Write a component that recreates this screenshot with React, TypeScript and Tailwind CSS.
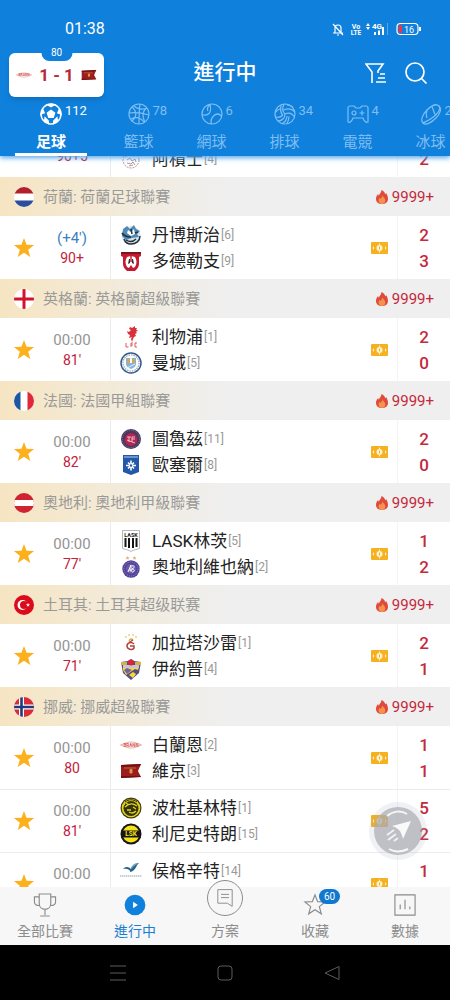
import { ReactNode, useState } from "react";

interface Team {
  name: string;
  rank: number;
  score: number;
  crest: string;
}

interface Match {
  kickoff: string;
  added?: boolean;
  minute: string;
  home?: Team;
  away?: Team;
}

interface League {
  title?: string;
  flag?: string;
  matches: Match[];
}

const LEAGUES: League[] = [
  {
    matches: [{ kickoff: "", minute: "90+5", away: { name: "阿積士", rank: 4, score: 2, crest: "ajax" } }],
  },
  {
    title: "荷蘭: 荷蘭足球聯賽",
    flag: "nl",
    matches: [
      {
        kickoff: "(+4')",
        added: true,
        minute: "90+",
        home: { name: "丹博斯治", rank: 6, score: 2, crest: "denbosch" },
        away: { name: "多德勒支", rank: 9, score: 3, crest: "dordrecht" },
      },
    ],
  },
  {
    title: "英格蘭: 英格蘭超級聯賽",
    flag: "en",
    matches: [
      {
        kickoff: "00:00",
        minute: "81'",
        home: { name: "利物浦", rank: 1, score: 2, crest: "liverpool" },
        away: { name: "曼城", rank: 5, score: 0, crest: "mancity" },
      },
    ],
  },
  {
    title: "法國: 法國甲組聯賽",
    flag: "fr",
    matches: [
      {
        kickoff: "00:00",
        minute: "82'",
        home: { name: "圖魯茲", rank: 11, score: 2, crest: "toulouse" },
        away: { name: "歐塞爾", rank: 8, score: 0, crest: "auxerre" },
      },
    ],
  },
  {
    title: "奧地利: 奧地利甲級聯賽",
    flag: "at",
    matches: [
      {
        kickoff: "00:00",
        minute: "77'",
        home: { name: "LASK林茨", rank: 5, score: 1, crest: "lask" },
        away: { name: "奧地利維也納", rank: 2, score: 2, crest: "austria" },
      },
    ],
  },
  {
    title: "土耳其: 土耳其超级联赛",
    flag: "tr",
    matches: [
      {
        kickoff: "00:00",
        minute: "71'",
        home: { name: "加拉塔沙雷", rank: 1, score: 2, crest: "galatasaray" },
        away: { name: "伊約普", rank: 4, score: 1, crest: "eyup" },
      },
    ],
  },
  {
    title: "挪威: 挪威超級聯賽",
    flag: "no",
    matches: [
      {
        kickoff: "00:00",
        minute: "80",
        home: { name: "白蘭恩", rank: 2, score: 1, crest: "brann" },
        away: { name: "維京", rank: 3, score: 1, crest: "viking" },
      },
      {
        kickoff: "00:00",
        minute: "81'",
        home: { name: "波杜基林特", rank: 1, score: 5, crest: "bodo" },
        away: { name: "利尼史特朗", rank: 15, score: 2, crest: "lsk" },
      },
      {
        kickoff: "00:00",
        minute: "81'",
        home: { name: "侯格辛特", rank: 14, score: 1, crest: "haugesund" },
      },
    ],
  },
];

const FLAGS: Record<string, ReactNode> = {
  nl: (
    <>
      <path fill="#fff" d="M0 0h20v20H0z" />
      <path fill="#b3202c" d="M0 0h20v6.500H0z" />
      <path fill="#2a4d9c" d="M0 13.500h20V20H0z" />
    </>
  ),
  en: (
    <>
      <path fill="#fff" d="M0 0h20v20H0z" />
      <path fill="#d3122d" d="M8.500 0h3v20h-3zM0 8.500h20v3H0z" />
    </>
  ),
  fr: (
    <>
      <path fill="#fff" d="M0 0h20v20H0z" />
      <path fill="#1d56a5" d="M0 0h6.500v20H0z" />
      <path fill="#e0283a" d="M13.500 0H20v20h-6.500z" />
    </>
  ),
  at: (
    <>
      <path fill="#d02331" d="M0 0h20v20H0z" />
      <path fill="#fff" d="M0 7h20v6H0z" />
    </>
  ),
  tr: (
    <>
      <path fill="#dc0b1b" d="M0 0h20v20H0z" />
      <circle cx="8.500" cy="10" r="5" fill="#fff" />
      <circle cx="10" cy="10" r="4" fill="#dc0b1b" />
      <path fill="#fff" d="M14 7.800l.5 1.500h1.600l-1.300.9.5 1.600-1.300-1-1.300 1 .5-1.600-1.300-.9H13.500z" />
    </>
  ),
  no: (
    <>
      <path fill="#d92b38" d="M0 0h20v20H0z" />
      <path fill="#fff" d="M5 0h5v20H5zM0 7.500h20v5H0z" />
      <path fill="#203a7c" d="M6.200 0h2.600v20H6.200zM0 8.700h20v2.600H0z" />
    </>
  ),
};

const CRESTS: Record<string, ReactNode> = {
  ajax: (
    <g fill="none" stroke="#a3787e" strokeWidth=".8">
      <circle cx="11" cy="12" r="8" strokeDasharray="2 1" />
      <path d="M5 9l5-3 4 2 3-2M7 12l3-2 2 3 3-2 1 3M7 15l4 1 2-2 2 3M9 18l4-1M5 5l3 2M16 4l-2 3" />
    </g>
  ),
  denbosch: (
    <>
      <circle cx="11" cy="11.500" r="9.500" fill="#d8e4ec" />
      <path fill="#4d8ab5" d="M3 5l4-3 3 3 4-4 2 4 4 2-3 3 2 3-7 1-6 2-4-4z" />
      <path fill="#fff" d="M8 6l3 2 3-3 1 5-4 2-4-3z" />
      <path fill="none" stroke="#27313c" strokeWidth="1.500" d="M2 9c2 3 5 4 9 4M20 12c0 5-4 8-9 8-3 0-6-2-7-5M11 5l1 5M15 9l3-1" />
      <path stroke="#27313c" strokeWidth="1.500" d="M6 16c3 2 7 2 10-1" fill="none" />
    </>
  ),
  dordrecht: (
    <>
      <path fill="#c5192f" d="M1 2h20v4l-2 1v7c0 3-2 5-4 7H7c-2-2-4-4-4-7V7L1 6z" />
      <path fill="#7e1321" d="M1 2h20v2H1z" />
      <path fill="#fff" d="M7 7c2-1 6-1 8 0 2 3 2 7 0 10l-2 1-2-3-2 3-2-1c-2-3-2-7 0-10z" />
      <path fill="#38242a" d="M9 9h1v4l-2 1zM12 9h1l1 5-2-1z" />
      <path fill="#c5192f" d="M10.300 6h1.400v6h-1.400z" />
    </>
  ),
  liverpool: (
    <>
      <path
        fill="#d9303b"
        d="M15 0l-3 2-2-1-1 2 2 1-2 2-2-1 1 3 2 1-1 3 3-1-1 2 1 3 1-3 1-2 2-1-1-2 2-1-1-1 2-2-2 0 1-2-2 0z"
      />
      <path stroke="#d9303b" strokeWidth=".8" fill="none" d="M6 17v4h2.500M11 21v-4h2M11 19h2M17 17h-2v4h2" />
    </>
  ),
  mancity: (
    <>
      <circle cx="11" cy="11" r="10" fill="#fff" stroke="#345b8c" strokeWidth="1.500" />
      <circle cx="11" cy="11" r="8" fill="none" stroke="#8ba7c6" strokeWidth="1.200" strokeDasharray="1.500 1" />
      <path fill="#83b4dc" d="M6 6h10v6c0 2-2 4-5 5-3-1-5-3-5-5z" />
      <path fill="#d5a64a" d="M7 7h8v4H7z" />
      <path fill="#fff" d="M10 5l1 2 1-2v6h-2z" />
      <path stroke="#e9f1f7" d="M7 16l8-4" />
    </>
  ),
  toulouse: (
    <>
      <circle cx="11" cy="11" r="10" fill="#46375f" />
      <circle cx="11" cy="11" r="8.600" fill="none" stroke="#a99bba" strokeWidth=".6" strokeDasharray="1 1" />
      <circle cx="11" cy="11.500" r="6.500" fill="#b3264f" />
      <path stroke="#f0cfda" fill="none" strokeWidth=".9" d="M7 9h4M9 9v5M12 14V9h3M12 11h3M7 12l8 3" />
    </>
  ),
  auxerre: (
    <>
      <path fill="#2258a8" d="M3 1h16v17l-8 3-8-3z" />
      <path fill="#cfdcee" d="M4 2h14v2H4z" opacity=".45" />
      <path stroke="#fff" strokeWidth="1.600" d="M11 6.500v10M6 11.500h10M8 8.500l6 6M14 8.500l-6 6" />
      <circle cx="11" cy="11.500" r="1.200" fill="#2258a8" />
    </>
  ),
  lask: (
    <>
      <path fill="#fff" stroke="#999" strokeWidth=".7" d="M2.500 .5h17v18c-2 1-6 1-8.500 3-2.500-2-6.500-2-8.500-3z" />
      <text x="11" y="6.500" fontSize="5.500" fontWeight="700" textAnchor="middle" fill="#222">
        LASK
      </text>
      <path fill="#151515" d="M4.500 8h2v9h-2zM8 8h2v10H8zM12 8h2v10h-2zM15.500 8h2v9h-2z" />
    </>
  ),
  austria: (
    <>
      <path fill="#dcb877" d="M7.500 0l.6 1.300 1.400.1-1 1 .2 1.400-1.200-.7-1.200.7.2-1.400-1-1 1.400-.1zM14.500 0l.6 1.300 1.400.1-1 1 .2 1.400-1.200-.7-1.200.7.2-1.400-1-1 1.400-.1z" />
      <circle cx="11" cy="13" r="8.700" fill="#54429a" />
      <circle cx="11" cy="13" r="7" fill="none" stroke="#a99fd2" strokeWidth=".7" strokeDasharray="1 1" />
      <circle cx="11" cy="13" r="5" fill="#6b5bad" />
      <path fill="none" stroke="#fff" d="M8 16l3-7v7M9 14h3M12 10c3-1 3 2 0 3 3 0 3 3 0 3" />
    </>
  ),
  galatasaray: (
    <>
      <g fill="#e9cc86">
        <circle cx="6" cy="5" r=".9" />
        <circle cx="9" cy="3" r=".9" />
        <circle cx="13" cy="3" r=".9" />
        <circle cx="16" cy="5" r=".9" />
      </g>
      <path fill="none" stroke="#e7a33a" strokeWidth="1.500" d="M13 8c-2-2-5 0-3 2" />
      <path fill="none" stroke="#b2443e" strokeWidth="1.500" d="M14 12c-3-3-7-1-7 2s5 5 7 2v-2h-4M10 10l3-2" />
    </>
  ),
  eyup: (
    <>
      <path fill="#5a4a86" d="M1 4l7-1 3-2 3 2 7 1-2 11-8 7-8-7z" />
      <path fill="#f0dc3c" d="M3 12l3 5 9-6 3 1 1-3H3zM9 17l4 3 3-4-3-2z" />
      <path fill="#6f66a0" d="M7 10l5 2-5 4-3-4z" />
      <path fill="#d9b23c" d="M1 4h6v3H1zM15 4h6v3h-6z" />
      <path fill="#c9c4d6" d="M3 7h16v3H3z" />
      <circle cx="11" cy="4.500" r="3" fill="#d8253c" />
    </>
  ),
  brann: (
    <>
      <path fill="#fff" stroke="#e28a86" strokeWidth=".7" d="M0.500 11l4-1.500c4-2 9-2 13 0l4 1.500-4 1.500c-4 2-9 2-13 0z" />
      <text x="11" y="12.600" fontSize="4.500" fontWeight="700" textAnchor="middle" fill="#d4544e">
        BRANN
      </text>
    </>
  ),
  viking: (
    <>
      <path fill="#9d1d1d" d="M1 5l20-1-3 7 3 6-20 1z" />
      <path fill="#6f1212" d="M1 5l20-1-1 2-19 1zM1 16h19l1 1-20 1z" />
      <path fill="none" stroke="#c67b3f" strokeWidth=".8" d="M4 8h12" />
      <path fill="#d9954e" d="M9.500 9.500l1.500-1 1.500 1v3L11 14l-1.500-1.500z" />
    </>
  ),
  bodo: (
    <>
      <circle cx="11" cy="11" r="10.500" fill="#3c3a14" />
      <circle cx="11" cy="11" r="9.300" fill="#e2d21d" />
      <circle cx="11" cy="11.500" r="7.500" fill="#33330f" />
      <path fill="none" stroke="#e2d21d" strokeWidth="1.400" d="M5 10c4-4 8-4 12-1M7 13h4M9 15c3 2 5 1 7-1M13 10l3 2M6 6l3 2" />
      <path stroke="#33330f" strokeWidth="1" d="M5 5c4-3 8-3 12 0" fill="none" />
    </>
  ),
  lsk: (
    <>
      <circle cx="11" cy="11" r="10.500" fill="#161616" />
      <circle cx="11" cy="11" r="8.500" fill="#f5e21b" />
      <path fill="#161616" d="M1 7.500h20v7H1z" />
      <text x="11" y="13.300" fontSize="6.500" fontWeight="700" textAnchor="middle" fill="#f5e21b">
        LSK
      </text>
    </>
  ),
  haugesund: (
    <>
      <path fill="#2b6289" d="M3 9c3-3 6-2 8 0 1-4 5-6 8-6-3 2-3 8-9 9 1-2-4-4-7-3z" />
      <path fill="#6fa7c6" d="M11 9c2-2 4-4 8-6-5 0-8 3-8 6z" />
      <path stroke="#88a8bd" d="M0 16h22" strokeDasharray="1.500 .5" />
    </>
  ),
};

function Crest({ id }: { id: string }) {
  return (
    <svg viewBox="0 0 22 22" className="h-[22px] w-[22px] shrink-0">
      {CRESTS[id]}
    </svg>
  );
}

function Star() {
  return (
    <svg viewBox="0 0 20 20" className="h-[22px] w-[22px]">
      <path fill="#fbb01c" d="M10 .8l2.300 6.300 6.900.2-5.400 4.200 1.900 6.600L10 14.300l-5.700 3.800 1.900-6.600L.8 7.300l6.900-.2z" />
    </svg>
  );
}

function Flame() {
  return (
    <svg viewBox="0 0 12 14" className="h-[14px] w-3">
      <path fill="#df4a3b" d="M5.500 0c2 .8 3.300 2.200 3.700 4.200.5-.3.800-.7.900-1.200 1.300 1.800 1.900 3.900 1.900 6 0 3-2.500 5-6 5s-6-2-6-5c0-2 .8-3.700 2.200-5 0 .8.2 1.400.6 1.800C3.200 4 5.500 2.600 5.500 0z" />
      <path fill="#f2934f" d="M6.300 5c.2 1.700 3 2.800 3 5.600 0 2-1.500 3.400-3.300 3.400s-3.400-1.200-3.400-3.200c0-1.300.6-2.200 1.100-3 .4.400.6.800.8 1.300C5.500 8 6.500 6.700 6.300 5z" />
    </svg>
  );
}

function Ticket() {
  return (
    <svg viewBox="0 0 17 12" className="h-3 w-[17px] shrink-0">
      <rect width="17" height="12" rx="1" fill="#f5b120" />
      <circle cx="8.500" cy="6" r="3" fill="#fff3d2" />
      <path stroke="#f5b120" strokeWidth="1" d="M8.500 4.500v3" />
      <path stroke="#fff3d2" d="M8.500 1.500v2M8.500 8.500v2" />
      <path fill="#fff3d2" d="M1.500 6l1.500-2v4zM15.500 6L14 4v4z" />
    </svg>
  );
}

function TeamLine({ team }: { team?: Team }) {
  return (
    <div className="flex h-[26px] items-center">
      {team && (
        <>
          <Crest id={team.crest} />
          <span className="ml-[10px] text-[17px] leading-[26px] text-[#222]">{team.name}</span>
          <span className="ml-px text-xs text-[#999]">[{team.rank}]</span>
        </>
      )}
    </div>
  );
}

function MatchRow({ match, divided }: { match: Match; divided: boolean }) {
  const [starred, setStarred] = useState(true);

  return (
    <div className={`flex h-[63px] items-stretch bg-white ${divided ? "border-t border-[#ececec]" : ""}`}>
      <div className="flex w-[111px] shrink-0 items-center border-r border-[#ececec]">
        <button
          aria-label="收藏"
          aria-pressed={starred}
          onClick={() => setStarred(!starred)}
          className={`flex w-12 justify-center ${starred ? "" : "opacity-30"}`}
        >
          <Star />
        </button>
        <div className="w-12 text-center">
          <div className={`h-5 text-[15px] leading-5 ${match.added ? "text-[#3a82bd]" : "text-[#949494]"}`}>
            {match.kickoff}
          </div>
          <div className="h-5 text-sm leading-5 text-[#c4203c]">{match.minute}</div>
        </div>
      </div>
      <div className="flex min-w-0 flex-1 items-center justify-between pr-[9px] pl-[9px]">
        <div>
          <TeamLine team={match.home} />
          <TeamLine team={match.away} />
        </div>
        {match.home && <Ticket />}
      </div>
      <div className="flex w-[53px] shrink-0 flex-col justify-center border-l border-[#f4f4f4] text-center text-[17px] font-medium text-[#c32a3c]">
        <div className="h-[26px] leading-[26px]">{match.home?.score}</div>
        <div className="h-[26px] leading-[26px]">{match.away?.score}</div>
      </div>
    </div>
  );
}

function LeagueHeader({ title, flag }: { title: string; flag: string }) {
  return (
    <div className="flex h-[39px] items-center bg-linear-to-r from-[#f6e5c2] via-[#efefef] via-50% to-[#efefef] pt-px pr-4 pl-[14px]">
      <span className="h-5 w-5 overflow-hidden rounded-full">
        <svg viewBox="0 0 20 20" className="h-5 w-5">
          {FLAGS[flag]}
        </svg>
      </span>
      <h2 className="ml-[9px] flex-1 text-[15px] text-[#9a9a98]">{title}</h2>
      <Flame />
      <span className="ml-1 text-[15px] text-[#c4283c]">9999+</span>
    </div>
  );
}

const SPORTS = [
  {
    label: "足球",
    count: 112,
    icon: (
      <>
        <circle cx="11" cy="11" r="10" strokeWidth="1.500" />
        <path fill="currentColor" d="M11 7.300l3.700 2.700-1.400 4.300H8.700L7.300 10zM7.500 1.700L11 3.700l3.500-2-3.500-.7zM1 11l1.800-4.500L4.300 9.800zM21 11l-1.800-4.500-1.500 3.300zM4.500 18.500l.5-4 3.200 3.200.3 3zM17.500 18.500l-.5-4-3.200 3.200-.3 3z" />
      </>
    ),
  },
  {
    label: "籃球",
    count: 78,
    icon: (
      <>
        <circle cx="11" cy="11" r="10" />
        <path d="M12 1c-1 6-1 14-1 20M1 10c7-1 13 0 20 2M4 4c5 4 5 10 0 14M19 5c-5 3-5 9-2 14M6 3c3 3 9 4 13 2M3 16c4-2 9-2 13 3" />
      </>
    ),
  },
  {
    label: "網球",
    count: 6,
    icon: (
      <>
        <circle cx="11" cy="11" r="10" />
        <path d="M9 1.500c1 4 1 7-1 9s-4 2-7 1M9 1.500C6 4 6 6 7 8M20.500 13c-3-3-6-2-8 0s-3 5-2 8" />
      </>
    ),
  },
  {
    label: "排球",
    count: 34,
    icon: (
      <>
        <circle cx="11" cy="11" r="10" />
        <path d="M11 11c-3-3-3-6-1-10M7 2.500c-1 5 0 8 2 10M11 11c4-2 7-1 9.500 3M10 7c4-2 8-1 11 2M11 11c0 4-3 7-7 7M13 13c0 3-2 6-5 8M15 13.500c0 3-1 5-2 7M1.500 9c2-2 3-3 4.500-3M2 14c3 1 5 0 7-2M13 2c3 0 5 1 6 3" />
      </>
    ),
  },
  {
    label: "電競",
    count: 4,
    icon: (
      <>
        <path d="M3 3h4l2 2h4l2-2h4c1 0 2 1 2 2v14c-2 1-4-1-5-4H6c-1 3-3 5-5 4V5c0-1 1-2 2-2z" />
        <circle cx="7" cy="10" r="2" />
        <path d="M15 7.500v5M12.500 10h5" />
      </>
    ),
  },
  {
    label: "冰球",
    count: 26,
    icon: (
      <>
        <path d="M3 20c-3-3 0-9 4-13s9-7 12-4M19 3c3 3 1 8-3 12s-10 8-13 5" />
        <path d="M19 3c2 3-1 7-5 10.500S5 19 3 20M7 7c-1 3-1 5 0 8M12 3.500l3 8" />
      </>
    ),
  },
];

const TABS = [
  {
    label: "全部比賽",
    icon: (
      <path d="M6 1h12v10c0 4-3 6-6 6s-6-2-6-6zM6 4H1v5c0 3 2 4 5 4M18 4h5v5c0 3-2 4-5 4M12 17v6M7 24h10" />
    ),
  },
  {
    label: "進行中",
    icon: (
      <>
        <circle cx="12" cy="12.500" r="10.800" fill="#0f80dc" stroke="none" />
        <path fill="#fff" stroke="none" d="M10 9l5 3.500-5 3.500z" />
      </>
    ),
  },
  {
    label: "方案",
    icon: <path d="M3 2h18v21l-6-4H3zM7 8h10M7 12h10" />,
  },
  {
    label: "收藏",
    badge: 60,
    icon: <path d="M12 2l2.800 7 7.700.4-6 4.800 2.100 7.500L12 17.500l-6.600 4.200 2.100-7.500-6-4.800 7.700-.4z" />,
  },
  {
    label: "數據",
    icon: <path d="M1.500 2h21v21h-21zM7 12v5M12 7v10M17 14v3" />,
  },
];

function StatusIcons() {
  return (
    <svg viewBox="0 0 92 16" className="h-4 w-[92px] text-white" fill="none" stroke="currentColor" strokeWidth="1.200">
      <path d="M2 12h10M4 12V7c0-2 1-3 3-3s3 1 3 3v5M6 14h2M2 3l10 11" />
      <g fill="currentColor" stroke="none" fontWeight="700">
        <text x="25" y="7.500" fontSize="7" textAnchor="middle">Vo</text>
        <text x="25" y="14" fontSize="6.500" textAnchor="middle">LTE</text>
        <text x="41" y="8" fontSize="8">4G</text>
        <path d="M35 5l2-3 2 3zM35 6l2 3 2-3zM43 11h2v3h-2zM47 9.500h2V14h-2zM51 6h2v8h-2z" />
        <path d="M56 2h1v12h-1z" opacity=".3" />
      </g>
      <rect x="66" y="2.500" width="21" height="11" rx="3.500" />
      <path fill="#e8374b" stroke="none" d="M69 4h2v8h-2c-1 0-1.500-1-1.500-2V6c0-1 .5-2 1.500-2z" />
      <path strokeWidth="2" d="M89 6v4" />
      <text x="78" y="11.500" fontSize="9" textAnchor="middle" fill="currentColor" stroke="none">16</text>
    </svg>
  );
}

function ScoreCard() {
  return (
    <div className="relative flex h-11 w-[95px] items-center justify-center gap-[7px] rounded-md bg-white shadow-md">
      <div className="absolute top-0 left-1/2 flex h-2 w-[31px] -translate-x-1/2 items-center justify-center rounded-b-lg bg-[#0f80dc]">
        <span className="pb-2 text-[10px] leading-3 text-white">80</span>
      </div>
      <svg viewBox="0 0 22 22" className="h-4 w-4">
        {CRESTS.brann}
      </svg>
      <span className="text-[17px] leading-5 font-bold whitespace-nowrap text-[#b62a3c]">1 - 1</span>
      <svg viewBox="0 0 22 22" className="h-4 w-4">
        {CRESTS.viking}
      </svg>
    </div>
  );
}

function Header() {
  const [active, setActive] = useState(0);

  return (
    <header className="relative z-10 shrink-0 bg-[#0f80dc] text-white shadow-[0_2px_5px_#5aa9ea]">
      <div className="flex h-[46px] items-center justify-between pt-3 pr-[27px] pl-[65px]">
        <span className="text-base">01:38</span>
        <StatusIcons />
      </div>
      <div className="grid h-[54px] grid-cols-[1fr_auto_1fr] items-center">
        <div className="pt-1 pl-[9px]">
          <ScoreCard />
        </div>
        <h1 className="text-[21px] font-medium">進行中</h1>
        <div className="flex justify-end gap-[18px] pr-[23px]">
          <button aria-label="篩選">
            <svg viewBox="0 0 22 22" className="h-[22px] w-[22px]" fill="none" stroke="currentColor" strokeWidth="1.600">
              <path d="M7 21V10L1 2h17l-5 7v2M11 20h10M13 16h7M15 12h5" />
            </svg>
          </button>
          <button aria-label="搜尋">
            <svg viewBox="0 0 22 22" className="h-[22px] w-[22px]" fill="none" stroke="currentColor" strokeWidth="1.700">
              <circle cx="10" cy="10" r="9" />
              <path d="M16 16l5.500 5.500" />
            </svg>
          </button>
        </div>
      </div>
      <nav className="flex h-14 overflow-hidden pl-[15px]">
        {SPORTS.map((s, i) => (
          <button
            key={s.label}
            onClick={() => setActive(i)}
            className={`flex shrink-0 flex-col items-center border-b-[3px] pt-[3px] ${i === 0 ? "mr-[15px] w-[72px]" : "w-[73px]"} ${
              i === active ? "border-white text-white" : "border-transparent text-[#7fbef2]"
            }`}
          >
            <span className="relative">
              <svg viewBox="0 0 22 22" className="h-[22px] w-[22px]" fill="none" stroke="currentColor" strokeWidth="1.200">
                {s.icon}
              </svg>
              <span className="absolute top-0 left-full ml-[3px] text-[13px] leading-4">{s.count}</span>
            </span>
            <span className={`mt-[7px] text-[15px] leading-5 ${i === active ? "font-bold" : ""}`}>{s.label}</span>
          </button>
        ))}
      </nav>
    </header>
  );
}

function FloatingButton() {
  return (
    <button
      aria-label="分享"
      className="absolute right-[23px] bottom-[27px] flex h-[58px] w-[58px] items-center justify-center rounded-full bg-[#9aa0b4]/15"
    >
      <svg viewBox="0 0 48 48" className="h-12 w-12">
        <circle cx="24" cy="24" r="24" fill="#a9abb2" opacity=".7" />
        <path fill="#fff" opacity=".9" d="M37 14L18 19c4 1 6 3 8 5 1 2 2 4 3 8z" />
        <path stroke="#fff" strokeWidth="1.800" opacity=".8" d="M13 28l7-5M14 33l8-6M20 34l4-3" />
        <path fill="none" stroke="#fff" strokeWidth="2" opacity=".85" d="M13 9c6-5 14-6 20-2M15 42c7 4 13 3 19 0" />
      </svg>
    </button>
  );
}

function BottomNav() {
  const [active, setActive] = useState(1);

  return (
    <nav className="relative z-10 grid h-[58px] shrink-0 grid-cols-5 grid-rows-1 bg-[#f7f7f7]">
      {TABS.map((t, i) => (
        <button
          key={t.label}
          onClick={() => setActive(i)}
          className={`flex flex-col items-center justify-end pb-1 ${i === active ? "text-[#1b7fd0]" : "text-[#8c8c8c]"}`}
        >
          <span
            className={`relative flex shrink-0 items-center justify-center ${
              i === 2 ? "mb-[5px] h-9 w-9 rounded-full border border-[#8c8c8c] bg-[#f7f7f7]" : "mb-1 h-6 w-6"
            }`}
          >
            <svg viewBox="0 0 24 25" className={i === 2 ? "h-5 w-5" : "h-6 w-6"} fill="none" stroke="currentColor" strokeWidth="1.200">
              {t.icon}
            </svg>
            {t.badge && (
              <span className="absolute -top-1 left-4 flex h-[15px] w-[21px] items-center justify-center rounded-full bg-[#1078cf] text-[10px] text-white">
                {t.badge}
              </span>
            )}
          </span>
          <span className="text-sm leading-5">{t.label}</span>
        </button>
      ))}
    </nav>
  );
}

function SystemBar() {
  return (
    <div className="grid h-[55px] shrink-0 grid-cols-3 items-center bg-black px-[64px] text-[#5c5c5c]">
      <button aria-label="選單" className="flex justify-center">
        <svg viewBox="0 0 16 16" className="h-4 w-4" stroke="currentColor">
          <path d="M0 1h16M0 8h16M0 15h16" />
        </svg>
      </button>
      <button aria-label="主畫面" className="flex justify-center">
        <svg viewBox="0 0 16 16" className="h-4 w-4" fill="none" stroke="currentColor">
          <rect x="1" y="1" width="14" height="14" rx="3" />
        </svg>
      </button>
      <button aria-label="返回" className="flex justify-center">
        <svg viewBox="0 0 16 16" className="h-4 w-4" fill="none" stroke="currentColor" strokeLinejoin="round">
          <path d="M15 1.500v13L1 8z" />
        </svg>
      </button>
    </div>
  );
}

export default function App() {
  return (
    <div className="flex h-screen flex-col bg-white font-[Roboto,'Noto_Sans_CJK_TC',sans-serif]">
      <Header />
      <div className="relative min-h-0 flex-1 overflow-hidden">
        {/* list is scrolled part way into its first match */}
        <main className="-mt-[42px]">
          {LEAGUES.map((league, i) => (
            <section key={i}>
              {league.title && league.flag && <LeagueHeader title={league.title} flag={league.flag} />}
              {league.matches.map((m, j) => (
                <MatchRow key={j} match={m} divided={j > 0} />
              ))}
            </section>
          ))}
        </main>
        <FloatingButton />
      </div>
      <BottomNav />
      <SystemBar />
    </div>
  );
}
